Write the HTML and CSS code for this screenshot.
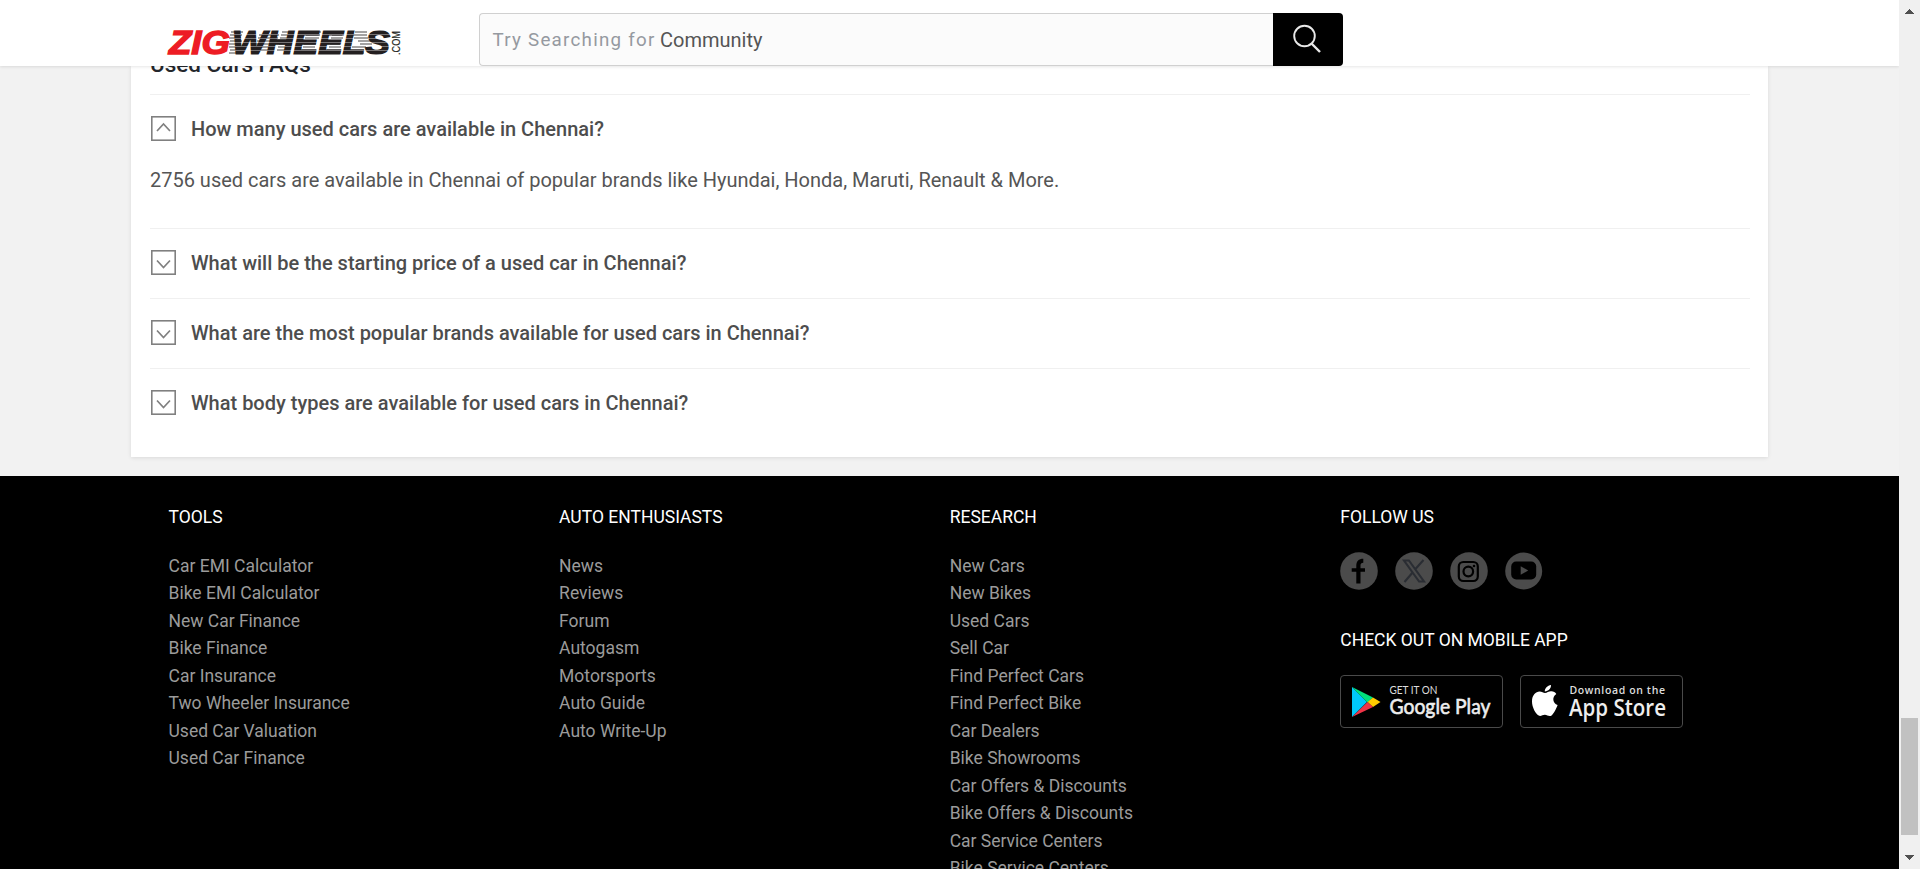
FILE: index.html
```html
<!DOCTYPE html>
<html lang="en">
<head>
<meta charset="utf-8">
<title>Used Cars in Chennai</title>
<link rel="stylesheet" href="styles.css">
</head>
<body>
<div class="window">
  <div class="page">
    <header class="header">
      <a class="logo"><svg width="236" height="32" viewBox="0 0 236 32">
        <defs>
          <pattern id="speed" width="236" height="4" patternUnits="userSpaceOnUse">
            <rect width="236" height="4" fill="#231f20"/>
            <rect y="3" width="236" height="1" fill="#777475"/>
          </pattern>
        </defs>
        <path d="M63 5h12M62 8h12M61 11h12M62 14h12M61 17h12M61 20h12M62 23h12M61 26h12M91 8h20M90 11h20M89 14h14M88 17h14M87 20h14M86 23h14M114 5h12M113 8h12M112 11h12M111 17h12M110 20h12M109 23h12M139 5h14M138 8h14M137 11h14M136 17h12M135 20h12M134 23h14M166 5h10M164 8h10M163 11h12M162 17h10M161 20h12M159 23h14M187 5h12M185 8h14M186 11h14M190 14h14M192 17h12M184 20h14M182 23h14M182 26h14" stroke="#4b4849" stroke-width="1.200"/>
        <g class="logo-text">
          <text x="1" y="26.800" fill="#ed1c24" stroke="#ed1c24" textLength="61" lengthAdjust="spacingAndGlyphs">ZIG</text>
          <text x="64" y="26.800" fill="url(#speed)" stroke="url(#speed)" textLength="158" lengthAdjust="spacingAndGlyphs">WHEELS</text>
        </g>
        <text class="logo-com" transform="translate(232 28) rotate(-90)" textLength="24" lengthAdjust="spacingAndGlyphs">.COM</text>
      </svg></a>
      <div class="search">
        <div class="search-field"><span class="search-hint">Try Searching for</span><span class="search-term">Community</span></div>
        <button class="search-button" aria-label="Search"><svg width="28" height="30" viewBox="0 0 28 30" fill="none" stroke="#e8e8e8"><circle cx="11.5" cy="12" r="10.3" stroke-width="1.9"/><path d="M18.5 19.5 27 28" stroke-width="2.400"/></svg></button>
      </div>
    </header>
    <main class="faq">
      <h2 class="faq-title">Used Cars FAQs</h2>
      <section class="faq-item open">
        <h3 class="question"><svg class="toggle" viewBox="0 0 25 25"><rect x=".75" y=".75" width="23.5" height="23.5"/><path d="m6 15 6.5-7L19 15"/></svg>How many used cars are available in Chennai?</h3>
        <p class="answer">2756 used cars are available in Chennai of popular brands like Hyundai, Honda, Maruti, Renault &amp; More.</p>
      </section>
      <section class="faq-item"><h3 class="question"><svg class="toggle" viewBox="0 0 25 25"><rect x=".75" y=".75" width="23.5" height="23.5"/><path d="m6 10.5 6.5 7 6.5-7"/></svg>What will be the starting price of a used car in Chennai?</h3></section>
      <section class="faq-item"><h3 class="question"><svg class="toggle" viewBox="0 0 25 25"><rect x=".75" y=".75" width="23.5" height="23.5"/><path d="m6 10.5 6.5 7 6.5-7"/></svg>What are the most popular brands available for used cars in Chennai?</h3></section>
      <section class="faq-item"><h3 class="question"><svg class="toggle" viewBox="0 0 25 25"><rect x=".75" y=".75" width="23.5" height="23.5"/><path d="m6 10.5 6.5 7 6.5-7"/></svg>What body types are available for used cars in Chennai?</h3></section>
    </main>
    <footer class="footer">
      <div class="col">
        <h4 class="col-title">TOOLS</h4>
        <ul class="links"><li>Car EMI Calculator</li><li>Bike EMI Calculator</li><li>New Car Finance</li><li>Bike Finance</li><li>Car Insurance</li><li>Two Wheeler Insurance</li><li>Used Car Valuation</li><li>Used Car Finance</li></ul>
      </div>
      <div class="col">
        <h4 class="col-title">AUTO ENTHUSIASTS</h4>
        <ul class="links"><li>News</li><li>Reviews</li><li>Forum</li><li>Autogasm</li><li>Motorsports</li><li>Auto Guide</li><li>Auto Write-Up</li></ul>
      </div>
      <div class="col">
        <h4 class="col-title">RESEARCH</h4>
        <ul class="links"><li>New Cars</li><li>New Bikes</li><li>Used Cars</li><li>Sell Car</li><li>Find Perfect Cars</li><li>Find Perfect Bike</li><li>Car Dealers</li><li>Bike Showrooms</li><li>Car Offers &amp; Discounts</li><li>Bike Offers &amp; Discounts</li><li>Car Service Centers</li><li>Bike Service Centers</li></ul>
      </div>
      <div class="col">
        <h4 class="col-title">FOLLOW US</h4>
        <div class="social">
          <svg class="social-icon" viewBox="0 0 38 38"><circle cx="19" cy="19" r="18.8" fill="#4b4b4b"/><path d="M16.300 31.500V19.800h-4.600v-3.600h4.600v-2.500c0-4.400 2.400-7 7-7v4c-2 0-2.800.8-2.800 2.800v2.700H25v3.600h-4.500v11.700z"/></svg>
          <svg class="social-icon" viewBox="0 0 38 38"><circle cx="19" cy="19" r="18.8" fill="#4b4b4b"/><path d="M9 8.500h4.900L29 29.500h-4.900zM28.500 8 20 17.500M9.500 30l8.500-10" fill="none" stroke="#2a2d33" stroke-width="2.100"/></svg>
          <svg class="social-icon" viewBox="0 0 38 38"><circle cx="19" cy="19" r="18.8" fill="#4b4b4b"/><g fill="none" stroke="#000" stroke-width="2.200"><rect x="8.800" y="10" width="19" height="19" rx="4.500"/><circle cx="18.300" cy="19.500" r="4.800"/></g><circle cx="24" cy="14" r="1.300"/></svg>
          <svg class="social-icon" viewBox="0 0 38 38"><circle cx="18.700" cy="19" r="18.500" fill="#4b4b4b"/><rect x="6.200" y="9.500" width="25" height="18" rx="5"/><path d="m15.700 14.200 7.500 4.300-7.500 4.300z" fill="#4b4b4b"/></svg>
        </div>
        <h4 class="col-title">CHECK OUT ON MOBILE APP</h4>
        <div class="badges">
          <a class="badge">
            <svg class="badge-art" viewBox="0 0 163 53">
              <path d="M12 12v30l15-15z" fill="#00c8fa"/><path d="M12 12 33 22.500 27.500 27.500z" fill="#00e27c"/><path d="m33 22.500 7.500 4.500-7.500 5-5.500-5z" fill="#ffcb00"/><path d="M12 42 33 32l-5.500-5z" fill="#f03347"/>
              <text class="badge-small google-small" x="49.500" y="19" textLength="48" lengthAdjust="spacingAndGlyphs">GET IT ON</text>
              <text class="badge-big google" x="49.500" y="38.500" textLength="101" lengthAdjust="spacingAndGlyphs">Google Play</text>
            </svg>
          </a>
          <a class="badge">
            <svg class="badge-art" viewBox="0 0 163 53">
              <path d="M25 18c2-.1 4-2 6.500-1.700 2 .2 3.700 1 4.800 2.600-4.500 2.900-3.700 9.200 1.300 11.200-1 3-3.500 8.400-6 10.400-2.800 1.500-4.300-.8-6.700-.8s-4 2-6.200.9c-3-1.600-6.700-8.400-6.700-14.200 0-6.500 4-9.900 7.500-9.900 2.300 0 4 1.500 5.500 1.500zM24.800 16.500c-.2-3 2.700-6 6.200-6.400.2 3.300-2.700 6.400-6.200 6.400z" fill="#fff"/>
              <text class="badge-small apple-small" x="49.500" y="19" textLength="95.500">Download on the</text>
              <text class="badge-big" x="49" y="40.500" textLength="97" lengthAdjust="spacingAndGlyphs">App Store</text>
            </svg>
          </a>
        </div>
      </div>
    </footer>
  </div>
  <div class="scrollbar">
    <svg width="9" height="5" viewBox="0 0 9 5" shape-rendering="crispEdges"><path d="M0 5 4.500 0 9 5z" fill="#505050"/></svg>
    <div class="thumb"></div>
    <svg width="9" height="5" viewBox="0 0 9 5" shape-rendering="crispEdges"><path d="M0 0h9L4.500 5z" fill="#505050"/></svg>
  </div>
</div>
</body>
</html>
```
FILE: styles.css
```css
* { box-sizing: border-box; }
body { margin: 0; overflow: hidden; font-family: Roboto, sans-serif; background: #f2f2f2; }
h2, h3, h4, p, ul { margin: 0; padding: 0; }
.window { display: flex; height: 869px; overflow: hidden; }
.page { width: 1899px; height: 869px; display: flex; flex-direction: column; overflow: hidden; }
.header { position: relative; z-index: 2; flex: none; height: 66px; display: flex; align-items: flex-start; padding: 13px 0 0 168px; background: #fff; box-shadow: 0 1px 3px rgba(0,0,0,.1); }
.logo { width: 311px; padding-top: 14px; }
.logo svg { display: block; overflow: visible; }
.logo-text { font: italic 700 34px "Liberation Sans", sans-serif; stroke-width: 1.4; }
.logo-com { font: 10.500px "Liberation Sans", sans-serif; fill: #231f20; stroke: #231f20; stroke-width: .2; }
.search { display: flex; width: 864px; height: 53px; }
.search-field { flex: 1; display: flex; align-items: center; border: 1px solid #d0d0d0; border-right: 0; border-radius: 4px 0 0 4px; background: #fbfbfb; padding-left: 12.500px; gap: 4.500px; }
.search-hint { font-size: 18.750px; letter-spacing: 1.250px; color: #9599a0; }
.search-term { font-size: 20px; color: #555; padding-top: 1px; }
.search-button { width: 70px; border: 0; border-radius: 0 4px 4px 0; background: #000; padding: 0 2px 2px 0; display: flex; align-items: center; justify-content: center; }
.faq { flex: none; width: 1637px; height: 391px; margin-left: 131px; padding: 0 18px 0 19px; background: #fff; box-shadow: 0 1px 4px rgba(0,0,0,.1); }
.faq-title { height: 49px; margin-top: -21px; font-size: 22.500px; font-weight: 500; line-height: 39px; color: #24272c; }
.faq-item { height: 70px; border-top: 1px solid #f0f0f0; padding-top: 21px; }
.faq-item.open { height: 134px; }
.question { display: flex; align-items: center; gap: 15px; height: 25px; padding-left: 1px; font-size: 20px; font-weight: 500; color: #4d4d4d; }
.toggle { width: 25px; height: 25px; fill: none; stroke: #808080; stroke-width: 1.700; }
.answer { padding-top: 24px; font-size: 20px; line-height: 30px; color: #555; letter-spacing: -.01px; }
.footer { flex: 1; margin-top: 19px; padding: 28px 0 0 168.500px; background: #000; display: grid; grid-template-columns: repeat(4, 390.600px); min-height: 0; }
.col-title { font-size: 17.500px; font-weight: 400; line-height: 27px; color: #fff; letter-spacing: 0; }
.links { list-style: none; padding-top: 21.750px; font-size: 17.500px; line-height: 27.500px; color: #9b9b9b; }
.social { display: flex; gap: 17px; padding: 21px 0 37px; margin-left: -.3px; }
.social-icon { width: 38px; height: 38px; display: block; }
.badges { display: flex; gap: 17px; padding-top: 21px; margin-left: -.3px; }
.badge { width: 163px; height: 53px; border: 1px solid #4a4a4a; border-radius: 4px; }
.badge-art { display: block; width: 163px; height: 53px; margin: -1px; }
.badge-small { font: 11px "Open Sans", sans-serif; fill: #ddd; }
.badge-small.apple-small { font-weight: 600; font-size: 10.500px; }
.badge-big { font: 600 23px "Open Sans", sans-serif; fill: #eee; }
.badge-small.google-small { font: 11.500px Lato, sans-serif; }
.badge-big.google { font: 22px Lato, sans-serif; stroke: #eee; stroke-width: .6; }
.scrollbar { width: 21px; background: #f0f0f0; display: flex; flex-direction: column; align-items: center; padding: 9px 0; }
.thumb { width: 17px; height: 117px; margin: auto 0 20px; background: #c1c1c1; }
```
